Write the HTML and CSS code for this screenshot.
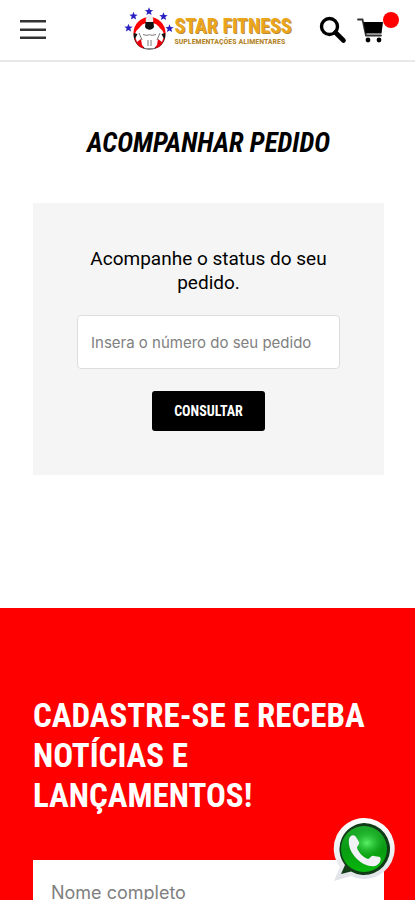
FILE: index.html
```html
<!DOCTYPE html>
<html lang="pt-BR">
<head>
  <meta charset="UTF-8">
  <meta name="viewport" content="width=device-width, initial-scale=1.0">
  <title>Acompanhar Pedido - Star Fitness</title>
  <link rel="stylesheet" href="styles.css">
</head>
<body>
  <header class="topbar">
    <button class="icon-btn menu-btn" type="button" aria-label="Menu">
      <svg width="28" height="22" viewBox="0 0 28 22">
        <path d="M1 2.2h26M1 10.7h26M1 18.7h26" stroke="#333" stroke-width="2.4"/>
      </svg>
    </button>

    <a class="logo" href="#" aria-label="Star Fitness">
      <svg class="logo-mark" width="50" height="46" viewBox="0 0 50 46">
        <defs>
          <path id="star" d="M0-4.3 1.1-1.4 4.2-1.3 1.8.6 2.6 3.6 0 1.900-2.6 3.6-1.8.6-4.2-1.3-1.1-1.4z"/>
        </defs>
        <circle cx="25.5" cy="26" r="16" fill="#f00"/>
        <circle cx="25.5" cy="28" r="12.5" fill="#fff"/>
        <path d="M9.500 27c0 9 6 15.500 16 15.500S41.500 36 41.500 27l-4 4-24 0z" fill="#111"/>
        <path d="M10.500 31c1 5 4 9 9 10.500l-1-9zM40.500 31c-1 5-4 9-9 10.500l1-9z" fill="#e8000b"/>
        <path d="M11 29c0-6 4-8.500 9-8.500h11c5 0 9 2.500 9 8.500l-2 6-4-3-1 6-3 3.500h-9L18 38l-1-6-4 3z" fill="#fff"/>
        <ellipse cx="25.500" cy="13" rx="3.800" ry="5" fill="#eee"/>
        <path d="M21.500 15h8l.500 5c-2 3.500-7 3.500-9 0z" fill="#111"/>
        <path d="M19 27.500c3 1 5 1 6.500 0 1.500 1 3.500 1 6.500 0M15 26l3 7M36 26l-3 7M24 33v6M27 33v6" fill="none" stroke="#555" stroke-width=".8"/>
        <path d="M9.500 26l4 1-2 4zM41.500 26l-4 1 2 4z" fill="#111"/>
        <g fill="#2a1fc0">
          <use href="#star" x="4.500" y="21"/>
          <use href="#star" x="9.500" y="9"/>
          <use href="#star" x="25" y="4.500"/>
          <use href="#star" x="39.500" y="9.500"/>
          <use href="#star" x="45.500" y="21.500"/>
        </g>
      </svg>
      <span class="logo-text">
        <span class="logo-name">STAR FITNESS</span>
        <span class="logo-sub">SUPLEMENTAÇÕES ALIMENTARES</span>
      </span>
    </a>

    <div class="actions">
      <button class="icon-btn" type="button" aria-label="Buscar">
        <svg width="28" height="28" viewBox="0 0 28 28" fill="none" stroke="#000">
          <circle cx="10.5" cy="10.5" r="8" stroke-width="3.4"/>
          <path d="M16.5 16.5l8 8" stroke-width="4.6" stroke-linecap="round"/>
        </svg>
      </button>
      <a class="icon-btn cart" href="#" aria-label="Carrinho">
        <svg width="28" height="26" viewBox="0 0 28 26">
          <path d="M1 2.500h4.500l3.500 16H24" fill="none" stroke="#333" stroke-width="1.8" stroke-linecap="round"/>
          <path d="M6.500 5H26l-1.500 11.500H8.500z" fill="#000"/>
          <circle cx="11" cy="23" r="2.400"/>
          <circle cx="22" cy="23" r="2.400"/>
        </svg>
        <span class="cart-badge"></span>
      </a>
    </div>
  </header>

  <main class="page">
    <h1 class="page-title">ACOMPANHAR PEDIDO</h1>

    <form class="order-form">
      <label class="order-label" for="pedido">Acompanhe o status do seu pedido.</label>
      <input class="order-input" type="text" id="pedido" placeholder="Insera o número do seu pedido">
      <button class="order-submit" type="submit">CONSULTAR</button>
    </form>
  </main>

  <section class="newsletter">
    <h2 class="newsletter-title">CADASTRE-SE E RECEBA NOTÍCIAS E LANÇAMENTOS!</h2>
    <form>
      <input class="newsletter-input" type="text" aria-label="Nome completo" placeholder="Nome completo">
    </form>
  </section>

  <a class="whatsapp" href="#" aria-label="WhatsApp">
    <svg width="64" height="64" viewBox="0 0 64 64">
      <defs>
        <linearGradient id="rim" x1="0" y1="0" x2="0" y2="1">
          <stop offset="0" stop-color="#fff"/>
          <stop offset="1" stop-color="#dfe2e8"/>
        </linearGradient>
        <linearGradient id="green" x1="0" y1="0" x2="0" y2="1">
          <stop offset="0" stop-color="#1fae2b"/>
          <stop offset=".5" stop-color="#0a9a12"/>
          <stop offset="1" stop-color="#07b80c"/>
        </linearGradient>
        <radialGradient id="shine">
          <stop offset="0" stop-color="#5cf268"/>
          <stop offset="1" stop-color="#27c535" stop-opacity="0"/>
        </radialGradient>
      </defs>
      <path d="M32 0a30.500 30.500 0 1 1-13 58L2 63l6-14A30.500 30.500 0 0 1 32 0z" fill="url(#rim)"/>
      <path d="M32 5a26 26 0 1 1-13 48.500L9 56l4-9A26 26 0 0 1 32 5z" fill="#123c18"/>
      <circle cx="32" cy="31" r="23" fill="url(#green)"/>
      <ellipse cx="35" cy="25" rx="17" ry="14" fill="url(#shine)"/>
      <path d="M17 21c1-4 5-5 7-2l3 5c1 2-2 4-2 6 2 5 6 9 11 11 2 0 3-4 6-3l6 1c2 3-1 8-5 9-6 1-13-2-18-7-6-6-9-13-8-20z" fill="#f0f2f5"/>
    </svg>
  </a>
</body>
</html>
```
FILE: styles.css
```css
* {
  box-sizing: border-box;
}
body {
  margin: 0;
  font-family: Inter, "Liberation Sans", sans-serif;
  background: #fff;
  color: #000;
}
.topbar {
  display: flex;
  align-items: center;
  justify-content: space-between;
  height: 62px;
  padding: 0 16px 0 19px;
  border-bottom: 2px solid #e8e8e8;
}
.icon-btn {
  display: flex;
  padding: 0;
  border: 0;
  background: none;
  cursor: pointer;
}
.logo {
  display: flex;
  align-items: center;
  margin-left: 50px;
  text-decoration: none;
}
.logo-text {
  display: flex;
  flex-direction: column;
  white-space: nowrap;
}
.logo-name {
  font: bold 20px/24px "Roboto Condensed", Roboto, sans-serif;
  color: #eba51b;
  text-shadow: 1px 1px 0 #b98a3a;
}
.logo-sub {
  font: bold 8px/8px "Roboto Condensed", Roboto, sans-serif;
  color: #b5852c;
}
.actions {
  display: flex;
  align-items: center;
  gap: 10px;
}
.cart {
  position: relative;
  margin-right: 14px;
}
.cart-badge {
  position: absolute;
  top: -5px;
  right: -14px;
  width: 16px;
  height: 16px;
  border-radius: 50%;
  background: #f00;
}
.page {
  padding: 66px 31px 133px 33px;
}
.page-title {
  margin: 0 0 45px;
  font: italic bold 27px/30px "Roboto Condensed", Roboto, sans-serif;
  text-align: center;
}
.order-form {
  display: flex;
  flex-direction: column;
  align-items: center;
  padding: 44px;
  background: #f5f5f5;
}
.order-label {
  margin-bottom: 20px;
  font: 19px/24px Roboto, "Liberation Sans", sans-serif;
  text-align: center;
}
.order-input {
  width: 100%;
  height: 54px;
  padding: 0 13px;
  border: 1px solid #ddd;
  border-radius: 4px;
  background: #fff;
  font: 15px Inter, "Liberation Sans", sans-serif;
}
.order-input::placeholder,
.newsletter-input::placeholder {
  color: #808080;
  opacity: 1;
}
.order-submit {
  height: 40px;
  margin-top: 22px;
  padding: 0 22px;
  border: 0;
  border-radius: 3px;
  background: #000;
  color: #fff;
  font: bold 14px "Roboto Condensed", Roboto, sans-serif;
  cursor: pointer;
}
.newsletter {
  padding: 88px 31px 64px 33px;
  background: #f00;
}
.newsletter-title {
  margin: 0 0 44px;
  font: bold 33px/40px "Roboto Condensed", Roboto, sans-serif;
  color: #fff;
}
.newsletter-input {
  width: 100%;
  height: 64px;
  padding: 0 18px;
  border: 0;
  background: #fff;
  font: 18px Inter, "Liberation Sans", sans-serif;
}
.whatsapp {
  position: fixed;
  right: 19px;
  bottom: 18px;
  display: flex;
}
```
